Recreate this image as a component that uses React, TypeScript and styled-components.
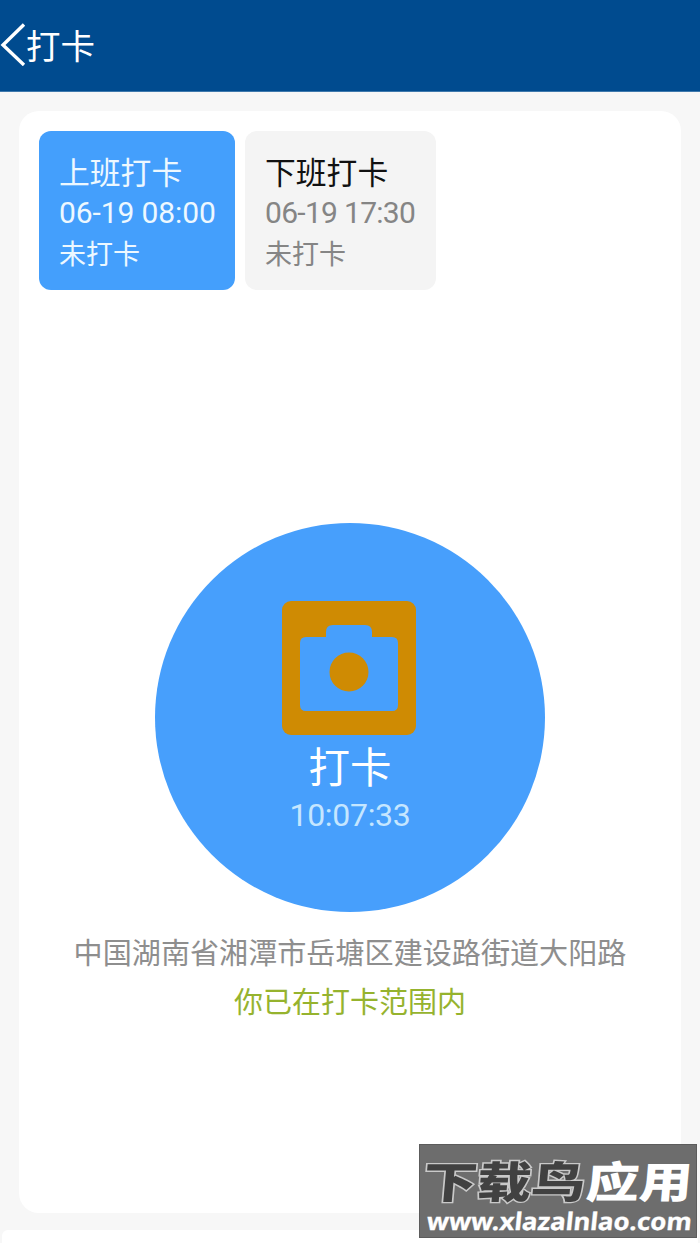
import React from 'react';
import styled, { createGlobalStyle } from 'styled-components';

const GlobalStyle = createGlobalStyle`
  * { box-sizing: border-box; }
  body {
    margin: 0;
    background: #f7f7f7;
    font-family: "Noto Sans CJK SC", sans-serif;
  }
`;

const Page = styled.div`
  position: relative;
  height: 1243px;
  overflow: hidden;
  display: flex;
  flex-direction: column;
`;

const Header = styled.header`
  flex: none;
  height: 92px;
  display: flex;
  align-items: center;
  background: #004b8f;
  border-bottom: 1px solid #3f79ad;
  color: #fff;
`;

const BackIcon = styled.svg`
  display: block;
  flex: none;
  width: 26px;
  height: 44px;
  margin-top: -3px;
`;

const HeaderTitle = styled.h1`
  margin: -3px 0 0;
  font-size: 34.5px;
  line-height: 50px;
  font-weight: 400;
`;

const Card = styled.main`
  flex: none;
  height: 1102px;
  margin: 19px 19px 0;
  padding: 20px;
  border-radius: 20px;
  background: #fff;
  display: flex;
  flex-direction: column;
  align-items: center;
`;

const NextCard = styled.section`
  flex: 1;
  margin: 17px 2px 0;
  border-radius: 6px 6px 0 0;
  background: #fff;
`;

const Shifts = styled.div`
  align-self: stretch;
  display: flex;
  gap: 10px;
`;

const Shift = styled.div<{ $active?: boolean }>`
  width: ${(p) => (p.$active ? 196 : 191)}px;
  height: 159px;
  padding: 18px 0 0 20px;
  border-radius: 12px;
  white-space: nowrap;
  background: ${(p) => (p.$active ? '#449ffc' : '#f4f4f4')};
  color: ${(p) => (p.$active ? '#edf8ff' : '#858585')};
`;

const ShiftName = styled.div<{ $active?: boolean }>`
  font-size: 30.8px;
  line-height: 43px;
  color: ${(p) => (p.$active ? '#edf8ff' : '#111')};
`;

const ShiftTime = styled.div<{ $spacing: number }>`
  font-family: Roboto, sans-serif;
  font-size: 30px;
  line-height: 42px;
  letter-spacing: ${(p) => p.$spacing}px;
`;

const ShiftStatus = styled.div`
  font-size: 27px;
  line-height: 37px;
`;

const PunchButton = styled.button`
  flex: none;
  width: 390px;
  height: 389px;
  margin: 233px 0 0;
  padding: 77px 0 0;
  border: 0;
  border-radius: 50%;
  background: #479ffc;
  color: #fff;
  font-family: inherit;
  display: flex;
  flex-direction: column;
  align-items: center;
`;

const CameraIcon = styled.svg`
  display: block;
  flex: none;
  width: 136px;
  height: 136px;
  margin-right: 2px;
`;

const PunchLabel = styled.span`
  font-size: 41.5px;
  line-height: 58px;
`;

const PunchTime = styled.span`
  font-family: Roboto, sans-serif;
  font-size: 32px;
  line-height: 42px;
  letter-spacing: -0.3px;
  color: #c5e6ff;
`;

const Address = styled.p`
  margin: 17px 0 0;
  font-size: 29.1px;
  line-height: 44px;
  color: #8e8e8e;
  white-space: nowrap;
`;

const RangeNote = styled.p`
  margin: 5px 0 0;
  font-size: 29px;
  line-height: 44px;
  color: #96b32e;
`;

const Watermark = styled.aside`
  position: absolute;
  left: 419px;
  top: 1144px;
  width: 278px;
  height: 94px;
  background: #6d6d6d;
  border: 1px solid #5c5c5c;
  color: #fff;
`;

const Brand = styled.svg`
  display: block;
  width: 276px;
  height: 92px;
  overflow: visible;
`;

const shifts = [
  { name: '上班打卡', time: '06-19 08:00', spacing: -0.1, active: true },
  { name: '下班打卡', time: '06-19 17:30', spacing: -0.7, active: false },
];

export default function App() {
  return (
    <>
      <GlobalStyle />
      <Page>
        <Header>
          <BackIcon viewBox="0 0 26 44" fill="none" stroke="#fff" strokeWidth="3.4">
            <path d="M24 2.5 3 23l21 20" />
          </BackIcon>
          <HeaderTitle>打卡</HeaderTitle>
        </Header>
        <Card>
          <Shifts>
            {shifts.map((s) => (
              <Shift key={s.name} $active={s.active}>
                <ShiftName $active={s.active}>{s.name}</ShiftName>
                <ShiftTime $spacing={s.spacing}>{s.time}</ShiftTime>
                <ShiftStatus>未打卡</ShiftStatus>
              </Shift>
            ))}
          </Shifts>
          <PunchButton>
            <CameraIcon viewBox="0 0 136 136">
              <rect x="1" y="1" width="134" height="134" rx="9" fill="#cf8b03" />
              <path
                fill="#479ffc"
                d="M23 37H45V32Q45 25 52 25H84Q91 25 91 32V37H111Q117 37 117 43V105Q117 111 111 111H25Q19 111 19 105V43Q19 37 25 37Z"
              />
              <circle cx="68" cy="72" r="19.5" fill="#cf8b03" />
            </CameraIcon>
            <PunchLabel>打卡</PunchLabel>
            <PunchTime>10:07:33</PunchTime>
          </PunchButton>
          <Address>中国湖南省湘潭市岳塘区建设路街道大阳路</Address>
          <RangeNote>你已在打卡范围内</RangeNote>
        </Card>
        <NextCard />
        <Watermark>
          <Brand viewBox="0 0 276 92">
            <g fontFamily="'Noto Sans CJK SC', sans-serif" fontWeight="900" fontSize="48">
              <text
                transform="translate(2 53) skewX(-5) scale(1 0.9)"
                textLength="162"
                lengthAdjust="spacingAndGlyphs"
                fill="#414141"
                stroke="#c9c9c9"
                strokeWidth="3"
                paintOrder="stroke"
              >
                下载鸟
              </text>
              <text
                transform="translate(165 53) skewX(-5) scale(1 0.9)"
                textLength="106"
                lengthAdjust="spacingAndGlyphs"
                fill="#fff"
              >
                应用
              </text>
            </g>
            <text
              transform="translate(6 85) skewX(-6)"
              textLength="265"
              lengthAdjust="spacingAndGlyphs"
              fontFamily="'Noto Sans', sans-serif"
              fontWeight="700"
              fontSize="24"
              fill="#fff"
              stroke="#fff"
              strokeWidth="0.3"
            >
              www.xlazalnlao.com
            </text>
          </Brand>
        </Watermark>
      </Page>
    </>
  );
}
